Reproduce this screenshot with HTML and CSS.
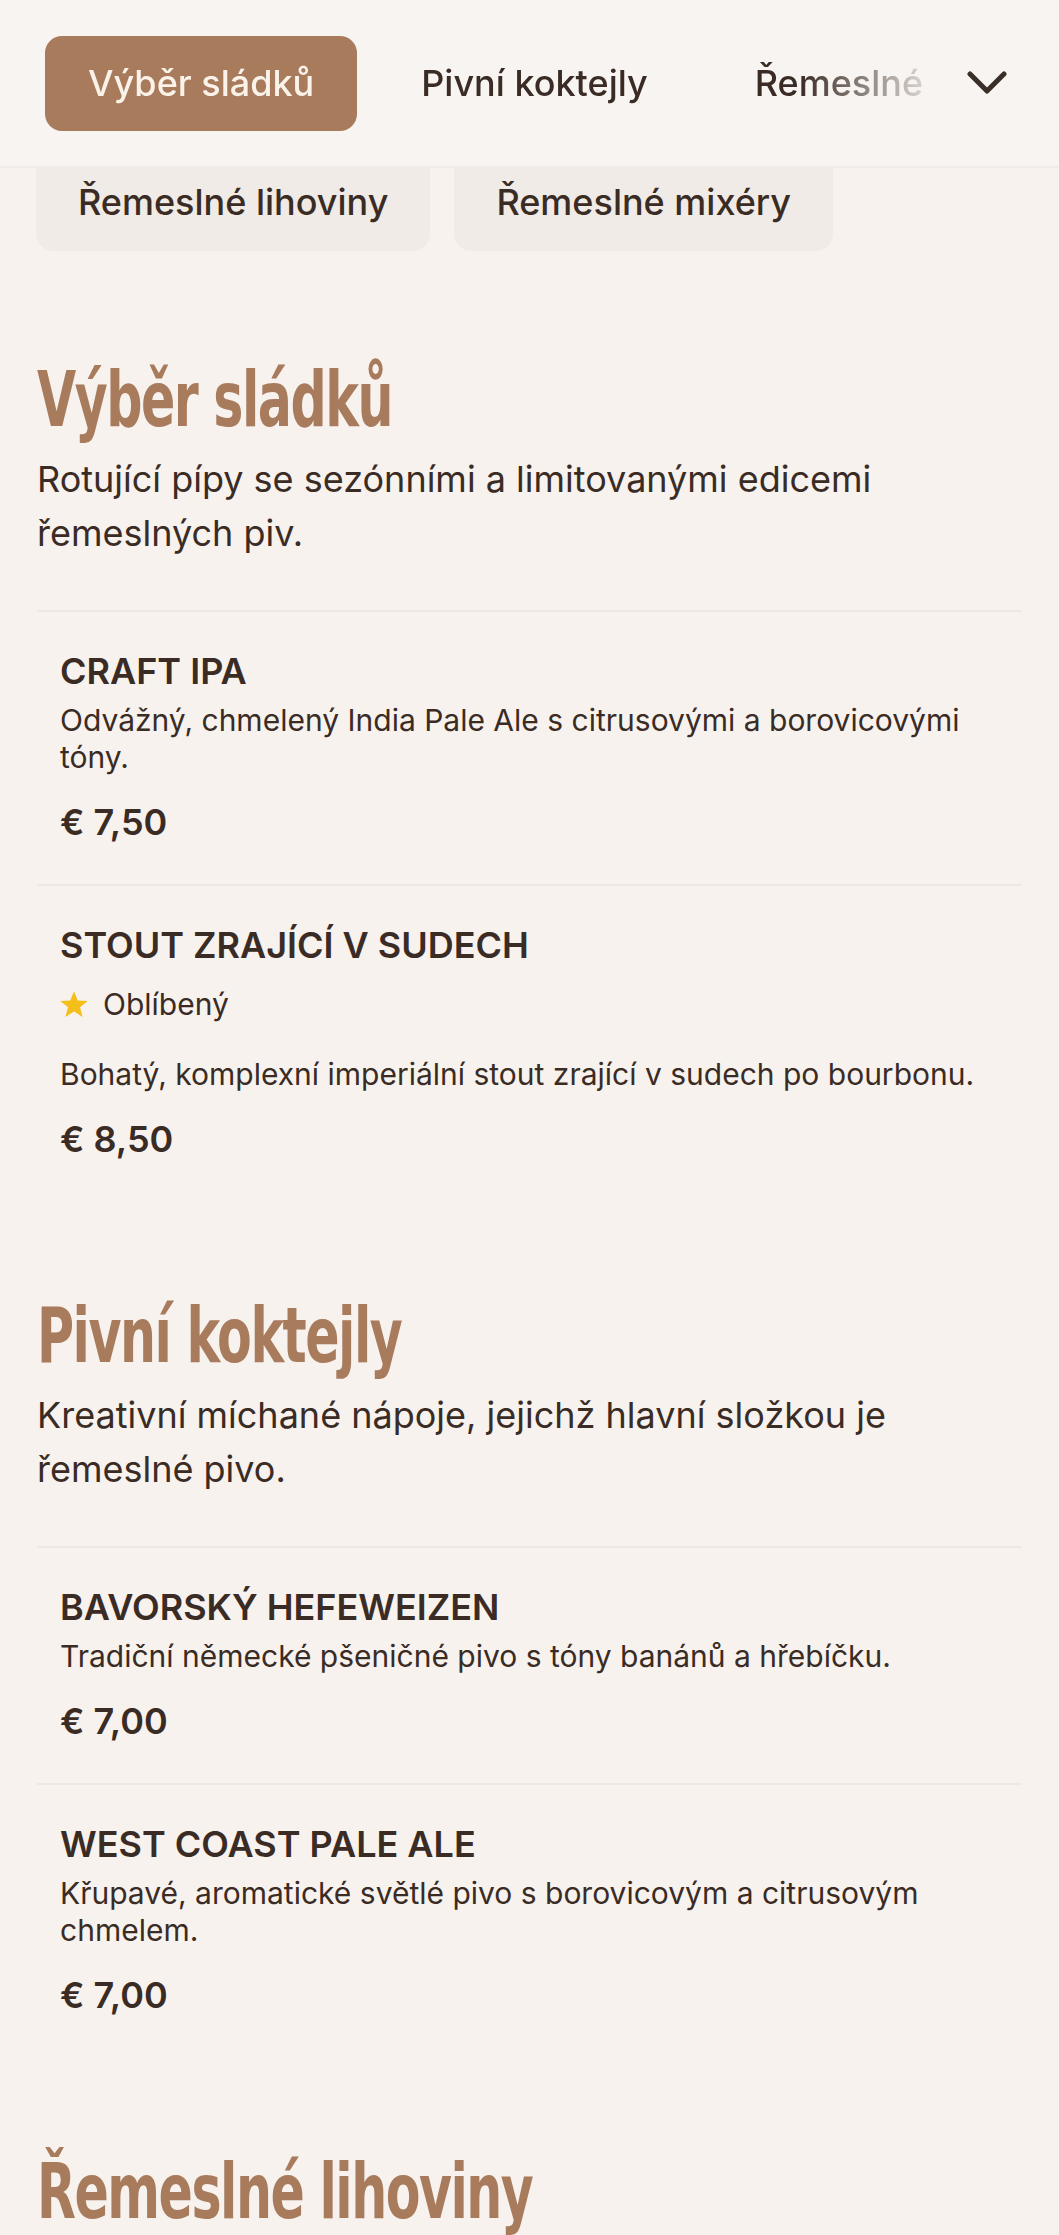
FILE: index.html
```html
<!DOCTYPE html>
<html lang="cs">
<head>
<meta charset="utf-8">
<title>Nápojový lístek</title>
<link rel="stylesheet" href="styles.css">
</head>
<body>
<header class="topbar">
  <nav class="tabs">
    <a class="tab tab-active" href="#vyber">Výběr sládků</a>
    <a class="tab" href="#koktejly">Pivní koktejly</a>
    <a class="tab" href="#lihoviny">Řemeslné lihoviny</a>
    <a class="tab" href="#mixery">Řemeslné mixéry</a>
  </nav>
  <button class="toggle" aria-label="Zobrazit všechny kategorie">
    <svg viewBox="0 0 40 24" width="40" height="24"><path d="M3 3 L20 20 L37 3" fill="none" stroke="#3a2e28" stroke-width="5" stroke-linecap="round" stroke-linejoin="round"/></svg>
  </button>
</header>
<div class="more-tabs">
  <a class="chip" href="#lihoviny">Řemeslné lihoviny</a>
  <a class="chip" href="#mixery">Řemeslné mixéry</a>
</div>
<main class="menu">
  <section class="section" id="vyber">
    <h2 class="section-title">Výběr sládků</h2>
    <p class="section-desc">Rotující pípy se sezónními a limitovanými edicemi řemeslných piv.</p>
    <article class="item">
      <h3 class="item-name">Craft IPA</h3>
      <p class="item-desc">Odvážný, chmelený India Pale Ale s citrusovými a borovicovými tóny.</p>
      <p class="item-price">€ 7,50</p>
    </article>
    <article class="item">
      <h3 class="item-name">Stout zrající v sudech</h3>
      <p class="badge"><svg class="star" viewBox="0 0 24 24" width="30" height="30"><path d="M12 1.8 L15 9.2 L23 9.6 L16.8 14.6 L18.9 22.4 L12 18 L5.1 22.4 L7.2 14.6 L1 9.6 L9 9.2 Z" fill="#f5bf1b"/></svg>Oblíbený</p>
      <p class="item-desc item-desc-gap">Bohatý, komplexní imperiální stout zrající v sudech po bourbonu.</p>
      <p class="item-price">€ 8,50</p>
    </article>
  </section>
  <section class="section" id="koktejly">
    <h2 class="section-title">Pivní koktejly</h2>
    <p class="section-desc">Kreativní míchané nápoje, jejichž hlavní složkou je řemeslné pivo.</p>
    <article class="item">
      <h3 class="item-name">Bavorský Hefeweizen</h3>
      <p class="item-desc">Tradiční německé pšeničné pivo s tóny banánů a hřebíčku.</p>
      <p class="item-price">€ 7,00</p>
    </article>
    <article class="item">
      <h3 class="item-name">West Coast Pale Ale</h3>
      <p class="item-desc">Křupavé, aromatické světlé pivo s borovicovým a citrusovým chmelem.</p>
      <p class="item-price">€ 7,00</p>
    </article>
  </section>
  <section class="section" id="lihoviny">
    <h2 class="section-title">Řemeslné lihoviny</h2>
    <p class="section-desc">Ručně vybrané destiláty z malých palíren.</p>
  </section>
</main>
</body>
</html>
```
FILE: styles.css
```css
* { box-sizing: border-box; }
html, body { margin: 0; padding: 0; }
body {
  background: #f7f2ee;
  color: #3a2c24;
  font-family: Inter, "Noto Sans", "DejaVu Sans", sans-serif;
}
a { color: inherit; text-decoration: none; }
p, h2, h3 { margin: 0; }

.topbar {
  height: 168px;
  display: flex;
  align-items: center;
  padding-left: 45px;
  background: #f8f4f1;
  border-bottom: 2px solid #f0ebe6;
}
.tabs {
  flex: 1;
  min-width: 0;
  display: flex;
  gap: 21px;
  overflow: hidden;
  white-space: nowrap;
  -webkit-mask-image: linear-gradient(to right, #000 0, #000 755px, rgba(0,0,0,0.15) 880px, transparent 888px);
  mask-image: linear-gradient(to right, #000 0, #000 755px, rgba(0,0,0,0.15) 880px, transparent 888px);
}
.tab {
  flex: none;
  height: 95px;
  display: flex;
  align-items: center;
  padding: 0 43px;
  border-radius: 17px;
  font-size: 36px;
  font-weight: 500;
}
.tab-active {
  background: #a87b5d;
  color: #fbf3ea;
}
.toggle {
  flex: none;
  width: 110px;
  height: 95px;
  border: 0;
  background: transparent;
  display: flex;
  align-items: center;
  justify-content: center;
  padding: 0 34px 0 0;
}

.more-tabs {
  display: flex;
  gap: 24px;
  padding-left: 36px;
}
.chip {
  height: 83px;
  padding: 14px 42px 0;
  line-height: 40px;
  font-size: 36px;
  font-weight: 500;
  background: #f0ebe6;
  border-radius: 0 0 17px 17px;
}

.menu {
  padding: 14px 37px 0;
}
.section {
  padding-top: 91px;
}
.section-title {
  font-family: "DejaVu Sans Condensed", "DejaVu Sans", sans-serif;
  font-stretch: condensed;
  font-weight: 700;
  font-size: 76px;
  line-height: 88px;
  letter-spacing: -2px;
  color: #a87b5d;
  transform: scaleX(0.74);
  transform-origin: left center;
}
.section-desc {
  margin-top: 8px;
  font-size: 36px;
  line-height: 54px;
  padding-bottom: 50px;
}
.item {
  border-top: 2px solid #efe8e2;
  padding: 39px 23px 42px;
}
.item-name {
  font-size: 36px;
  line-height: 40px;
  font-weight: 600;
  text-transform: uppercase;
}
.item-desc {
  margin-top: 11px;
  font-size: 30px;
  line-height: 37px;
}
.item-desc-gap { margin-top: 34px; }
.item-price {
  margin-top: 26px;
  font-size: 36px;
  line-height: 40px;
  font-weight: 600;
}
.badge {
  margin-top: 21px;
  display: flex;
  align-items: center;
  gap: 14px;
  font-size: 30px;
  line-height: 36px;
}
.star { flex: none; margin-left: -1px; }
```
